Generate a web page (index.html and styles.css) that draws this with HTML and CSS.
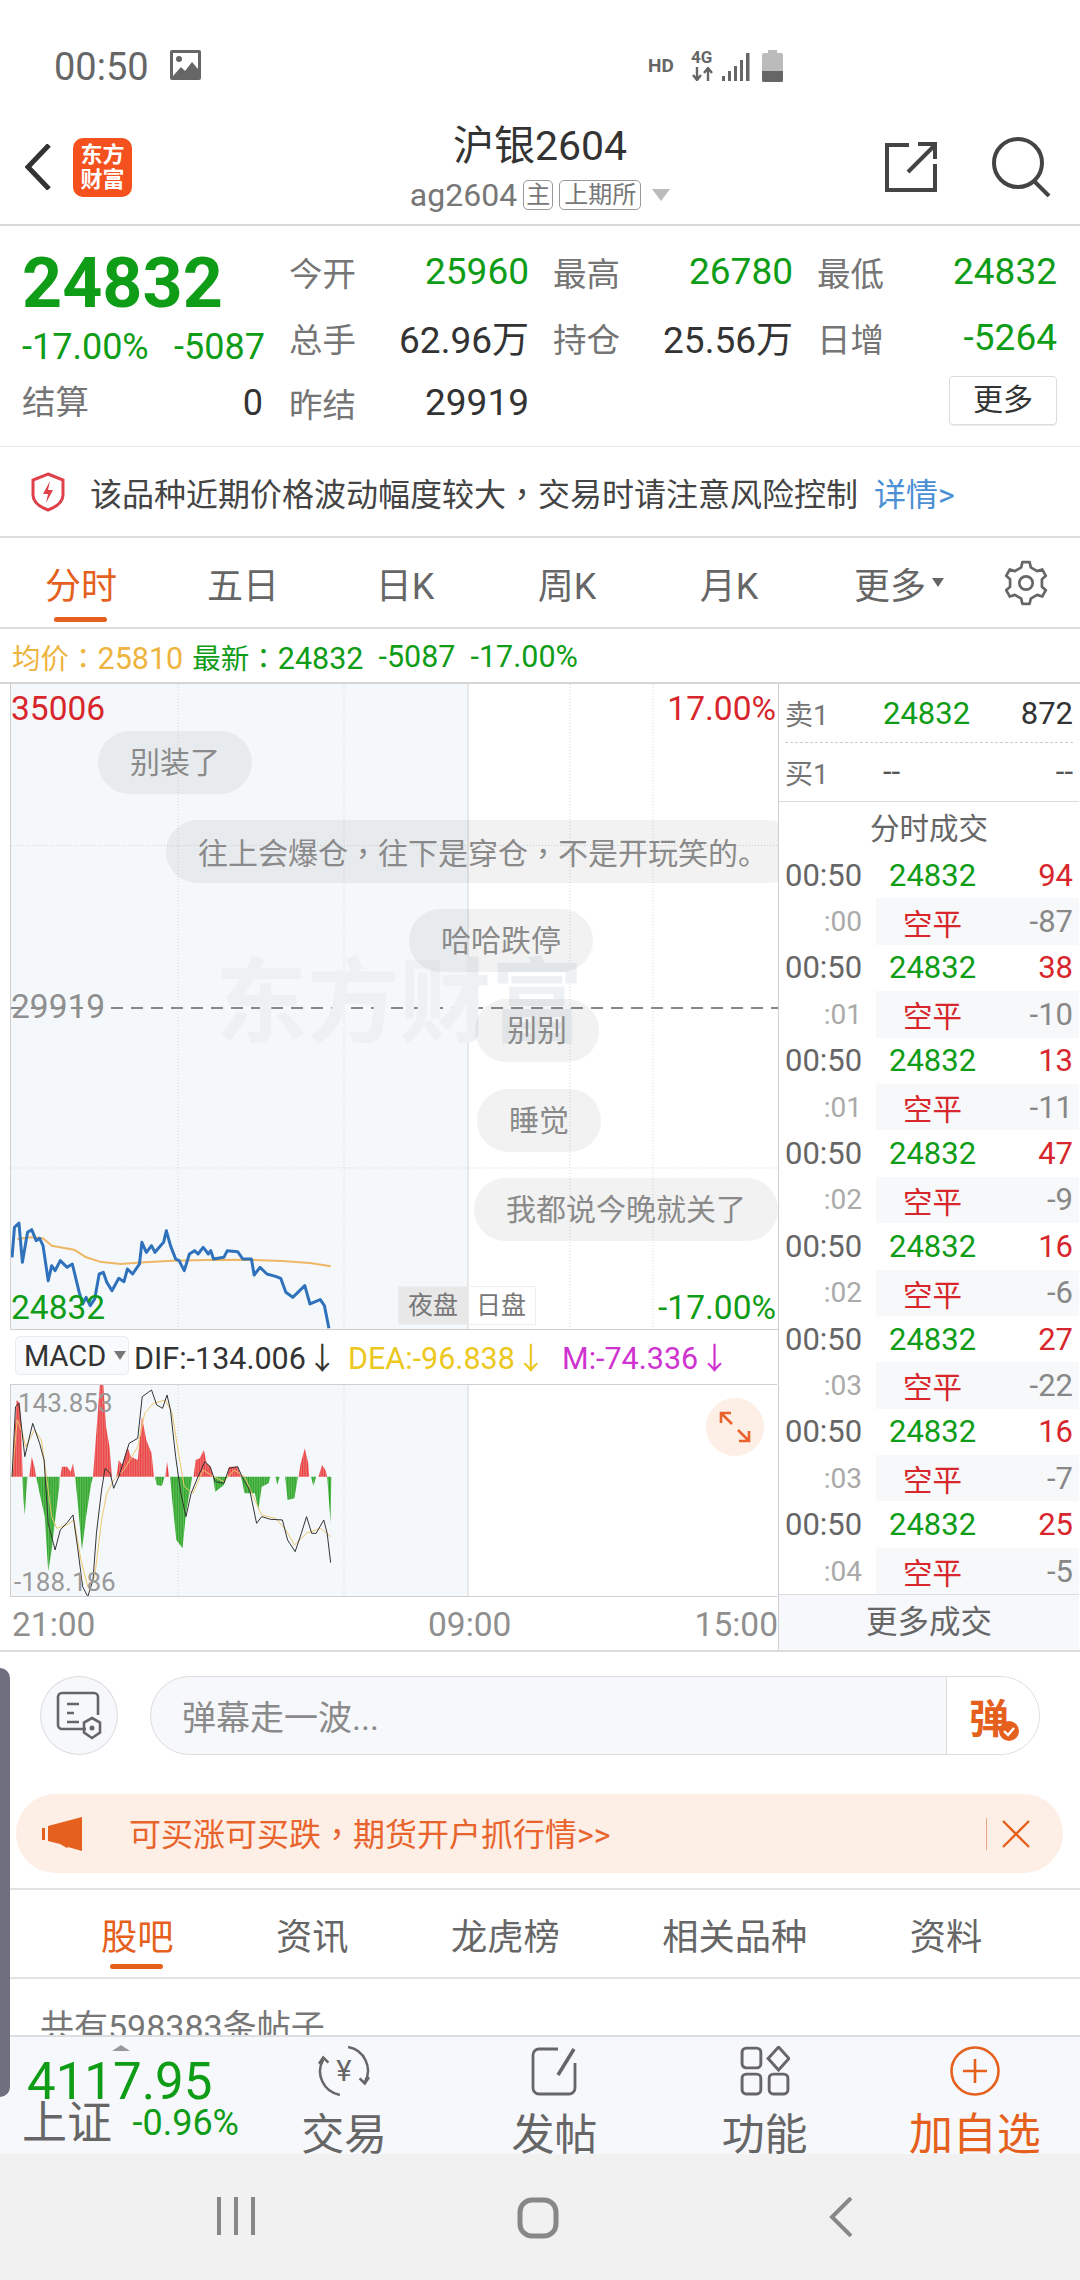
FILE: index.html
```html
<!DOCTYPE html>
<html lang="zh-CN">
<head>
    <meta charset="UTF-8">
    <meta name="viewport" content="width=device-width, initial-scale=1.0">
    <title>沪银2604</title>
    <link rel="stylesheet" href="styles.css">
</head>
<body>
    <div class="edge-handle"></div>

    <!-- Status bar -->
    <div class="status">
        <span class="clock">00:50</span>
        <svg class="st-pic" viewBox="0 0 31 30"><path fill="#666" d="M2 0h27a2 2 0 0 1 2 2v26a2 2 0 0 1-2 2H2a2 2 0 0 1-2-2V2a2 2 0 0 1 2-2z"/><path fill="#fff" d="M3 3h25v16l-6-7-7 9-4-4-8 9z"/><circle cx="9" cy="9" r="3" fill="#666"/></svg>
        <span class="st-hd">HD</span>
        <span class="st-net"><b>4G</b><svg viewBox="0 0 23 14"><path fill="none" stroke="#666" stroke-width="2.4" d="M6 0v12M2 8l4 5 4-5M17 14V2M13 6l4-5 4 5"/></svg></span>
        <svg class="st-signal" viewBox="0 0 28 28"><path fill="#666" d="M0 23h3v5H0zM6 18h3v10H6zM12 13h3v15h-3zM18 7h3v21h-3zM24 0h3.500v28H24z"/></svg>
        <svg class="st-batt" viewBox="0 0 21 32"><path fill="#bbb" d="M6 0h9v3h4a2 2 0 0 1 2 2v27H0V5a2 2 0 0 1 2-2h4z"/><path fill="#666" d="M0 21h21v9a2 2 0 0 1-2 2H2a2 2 0 0 1-2-2z"/></svg>
    </div>

    <!-- Title bar -->
    <div class="head">
        <svg class="back" viewBox="0 0 26 46"><path fill="none" stroke="#333" stroke-width="5" d="M24 1L3 23l21 22"/></svg>
        <div class="logo"><span>东方</span><span>财富</span></div>
        <div class="title-box">
            <div class="title">沪银2604</div>
            <div class="title-sub">ag2604<span class="tag tag-a">主</span><span class="tag tag-b">上期所</span><i class="tri"></i></div>
        </div>
        <svg class="share" viewBox="0 0 52 50"><path fill="none" stroke="#444" stroke-width="4" d="M24 3H2v45h48V22M23 30L49 4M33 2h17v15"/></svg>
        <svg class="search" viewBox="0 0 60 60"><circle cx="27" cy="26" r="24" fill="none" stroke="#444" stroke-width="4"/><path stroke="#444" stroke-width="4" d="M43 44l15 15"/></svg>
    </div>

    <!-- Quote -->
    <div class="quote">
        <div class="q-left">
            <div class="q-big down">24832</div>
            <div class="q-chg down"><span>-17.00%</span><span>-5087</span></div>
            <div class="q-settle"><span class="lb">结算</span><span>0</span></div>
        </div>
        <div class="q-grid">
            <div class="pair"><span class="lb">今开</span><span class="down">25960</span></div>
            <div class="pair"><span class="lb">最高</span><span class="down">26780</span></div>
            <div class="pair"><span class="lb">最低</span><span class="down">24832</span></div>
            <div class="pair"><span class="lb">总手</span><span>62.96万</span></div>
            <div class="pair"><span class="lb">持仓</span><span>25.56万</span></div>
            <div class="pair"><span class="lb">日增</span><span class="down">-5264</span></div>
            <div class="pair"><span class="lb">昨结</span><span>29919</span></div>
            <div></div>
            <div class="more-btn">更多</div>
        </div>
    </div>

    <!-- Risk notice -->
    <div class="notice">
        <svg class="shield" viewBox="0 0 36 40"><path fill="none" stroke="#e0404a" stroke-width="3" d="M18 2l15 6v15c0 7-7 12-15 15C10 35 3 30 3 23V8z"/><path fill="#e0404a" d="M20 9l-7 13h5l-2 9 7-13h-5z"/></svg>
        <span>该品种近期价格波动幅度较大<span class="pn" lang="zh-TW">，</span>交易时请注意风险控制</span>
        <span class="link">详情&gt;</span>
    </div>

    <!-- Period tabs -->
    <div class="tabs">
        <div class="tab on">分时</div>
        <div class="tab">五日</div>
        <div class="tab">日K</div>
        <div class="tab">周K</div>
        <div class="tab">月K</div>
        <div class="tab tab-more">更多<i class="tri-sm"></i></div>
        <div class="tab">
            <svg class="gear" viewBox="0 0 48 48"><path fill="none" stroke="#666" stroke-width="2.800" stroke-linejoin="round" d="M19 7.700L20.200 2.300H27.800L29 7.700L35.600 11.600L40.900 9.900L44.700 16.500L40.600 20.200V27.800L44.700 31.500L40.900 38.100L35.600 36.400L29 40.300L27.800 45.700H20.200L19 40.300L12.400 36.400L7.100 38.100L3.300 31.500L7.400 27.800V20.200L3.300 16.500L7.100 9.900L12.400 11.600z"/><circle cx="24" cy="24" r="7" fill="none" stroke="#666" stroke-width="2.800"/></svg>
        </div>
    </div>

    <div class="legend">
        <span class="avg"><span class="lg-k">均价<span class="pn" lang="zh-TW">：</span></span>25810</span>
        <span class="down"><span class="lg-k">最新<span class="pn" lang="zh-TW">：</span></span>24832</span>
        <span class="down">-5087</span>
        <span class="down">-17.00%</span>
    </div>

    <div class="market">
        <div class="charts">
            <!-- Price chart -->
            <div class="chart">
                <svg class="plot plot-main" viewBox="11 685 767 645">
                    <rect x="11" y="685" width="457" height="645" fill="#f5f8fb"/>
                    <path class="grid-dot" d="M178 685v645M344 685v645M570 685v645M653 685v645M11 846.500h767M11 1169h767"/>
                    <path class="grid-solid" d="M468 685v645"/>
                    <g transform="translate(0 1200) scale(.3444 .3333)">
                        <polyline class="ln-avg" points="50,120 90,115 125,118 150,140 215,152 250,175 290,188 350,195 420,190 500,185 600,183 720,182 820,186 900,192 960,202"/>
                        <polyline class="ln-price" points="35,175 42,85 55,72 65,190 80,100 92,92 105,125 115,118 125,140 140,245 150,200 160,215 175,185 195,205 210,195 230,280 240,315 250,295 262,320 275,300 288,225 300,220 310,250 325,275 345,238 360,248 370,210 385,225 405,195 412,130 425,160 440,140 450,160 475,130 483,95 495,140 510,180 520,185 535,215 550,165 565,155 575,165 590,145 605,165 612,155 620,180 650,175 660,155 690,158 705,180 730,180 738,228 755,205 775,225 800,232 815,238 830,280 850,295 870,275 885,260 900,315 930,302 942,320 955,388"/>
                    </g>
                    <path class="ln-base" d="M11 1009H778"/>
                </svg>
                <div class="wm">东方财富</div>
                <span class="ax ax-tl up">35006</span>
                <span class="ax ax-tr up">17.00%</span>
                <span class="ax ax-ml">29919</span>
                <span class="ax ax-bl down">24832</span>
                <span class="ax ax-br down">-17.00%</span>
                <div class="bub b1">别装了</div>
                <div class="bub b2">往上会爆仓<span class="pn" lang="zh-TW">，</span>往下是穿仓<span class="pn" lang="zh-TW">，</span>不是开玩笑的。</div>
                <div class="bub b3">哈哈跌停</div>
                <div class="bub b4">别别</div>
                <div class="bub b5">睡觉</div>
                <div class="bub b6">我都说今晚就关了</div>
                <div class="session"><span class="on">夜盘</span><span>日盘</span></div>
            </div>

            <!-- MACD -->
            <div class="macd-bar">
                <div class="macd-sel">MACD<i class="tri-md"></i></div>
                <span class="dif">DIF:-134.006<em>↓</em></span>
                <span class="dea">DEA:-96.838<em>↓</em></span>
                <span class="m">M:-74.336<em>↓</em></span>
            </div>
            <div class="chart macd">
                <svg class="plot plot-macd" viewBox="11 1385 767 212">
                    <defs>
                        <pattern id="barsRed" patternUnits="userSpaceOnUse" width="4.900" height="10"><rect width="4.200" height="10" fill="#ea3f3f"/></pattern>
                        <pattern id="barsGreen" patternUnits="userSpaceOnUse" width="4.900" height="10"><rect width="4.200" height="10" fill="#2aa523"/></pattern>
                    </defs>
                    <rect x="11" y="1385" width="457" height="212" fill="#f5f8fb"/>
                    <path class="grid-dot" d="M178 1385v212M344 1385v212"/>
                    <path class="grid-solid" d="M468 1385v212"/>
                    <g transform="translate(0 1200) scale(.3444 .3333)">
                        <path fill="url(#barsRed)" d="M35 830L40 740L48 600L58 610L62 700L66 830zM85 830L92 770L100 800L105 830zM175 830L180 800L195 800L205 815L212 790L218 830zM270 830L278 720L290 555L300 555L308 680L318 740L325 830zM338 830L345 780L355 795L370 740L380 770L400 780L412 650L425 720L440 760L447 830zM480 830L485 785L491 830zM562 830L568 780L580 775L592 750L600 790L612 800L618 830zM660 830L665 800L690 800L700 830zM867 830L872 795L885 745L895 790L898 830zM925 830L935 795L945 810L950 830z"/>
                        <path fill="url(#barsGreen)" d="M65 830L68 900L72 945L76 880L80 830zM105 830L115 880L130 950L140 1115L150 1050L160 960L172 860L173 830zM218 830L225 900L238 1050L250 950L265 850L270 830zM450 830L455 855L470 858L478 830zM494 830L500 900L512 1020L530 1045L540 940L555 850L558 830zM618 830L625 875L650 855L660 830zM700 830L710 880L740 880L750 930L760 860L780 850L785 830zM800 830L805 855L812 830zM828 830L835 900L855 895L865 830zM903 830L910 858L918 830zM950 830L960 970L962 830z"/>
                        <polyline class="ln-dea" points="35,830 50,660 65,700 75,740 100,690 120,720 135,830 150,950 165,985 195,975 215,960 235,1080 255,1160 275,1130 295,960 310,880 330,840 360,810 400,740 420,640 445,610 480,600 500,640 520,770 535,860 560,880 590,810 620,830 650,845 680,810 710,830 740,900 760,945 800,955 830,990 855,1035 890,1000 930,985 960,1010"/>
                        <polyline class="ln-dif" points="35,830 45,620 55,610 72,770 95,670 115,730 128,780 140,970 155,1030 160,1050 175,990 195,968 212,945 225,1040 240,1160 255,1190 270,1140 280,1000 295,870 305,805 320,820 330,865 345,830 375,730 400,715 413,590 440,570 455,615 472,625 485,585 495,630 510,770 525,880 540,950 555,880 575,830 595,785 610,800 625,845 650,850 665,805 690,800 705,835 725,870 745,970 760,950 785,958 820,960 835,1020 857,1055 875,1000 890,950 905,1000 918,1000 940,960 950,1000 960,1088"/>
                    </g>
                </svg>
                <span class="mx mx-t">143.853</span>
                <span class="mx mx-b">-188.186</span>
                <div class="expand">
                    <svg viewBox="0 0 32 32"><path fill="none" stroke="#e8642c" stroke-width="2.600" d="M2 12V2h10M2 2l11 11M30 20v10H20M30 30L19 19"/></svg>
                </div>
            </div>
            <div class="axis"><span class="ax-first">21:00</span><span>09:00</span><span class="ax-last">15:00</span></div>
        </div>

        <!-- Order book and ticks -->
        <div class="side">
            <div class="book book-sell"><span class="lb">卖1</span><span class="down">24832</span><span class="dark">872</span></div>
            <div class="book book-buy"><span class="lb">买1</span><span>--</span><span>--</span></div>
            <div class="ticks-title">分时成交</div>

            <div class="tick"><span class="t">00:50</span><div class="tv"><span class="down">24832</span><span class="up">94</span></div></div>
            <div class="tick tick-sub"><span class="t">:00</span><div class="tv"><span class="up">空平</span><span>-87</span></div></div>
            <div class="tick"><span class="t">00:50</span><div class="tv"><span class="down">24832</span><span class="up">38</span></div></div>
            <div class="tick tick-sub"><span class="t">:01</span><div class="tv"><span class="up">空平</span><span>-10</span></div></div>
            <div class="tick"><span class="t">00:50</span><div class="tv"><span class="down">24832</span><span class="up">13</span></div></div>
            <div class="tick tick-sub"><span class="t">:01</span><div class="tv"><span class="up">空平</span><span>-11</span></div></div>
            <div class="tick"><span class="t">00:50</span><div class="tv"><span class="down">24832</span><span class="up">47</span></div></div>
            <div class="tick tick-sub"><span class="t">:02</span><div class="tv"><span class="up">空平</span><span>-9</span></div></div>
            <div class="tick"><span class="t">00:50</span><div class="tv"><span class="down">24832</span><span class="up">16</span></div></div>
            <div class="tick tick-sub"><span class="t">:02</span><div class="tv"><span class="up">空平</span><span>-6</span></div></div>
            <div class="tick"><span class="t">00:50</span><div class="tv"><span class="down">24832</span><span class="up">27</span></div></div>
            <div class="tick tick-sub"><span class="t">:03</span><div class="tv"><span class="up">空平</span><span>-22</span></div></div>
            <div class="tick"><span class="t">00:50</span><div class="tv"><span class="down">24832</span><span class="up">16</span></div></div>
            <div class="tick tick-sub"><span class="t">:03</span><div class="tv"><span class="up">空平</span><span>-7</span></div></div>
            <div class="tick"><span class="t">00:50</span><div class="tv"><span class="down">24832</span><span class="up">25</span></div></div>
            <div class="tick tick-sub"><span class="t">:04</span><div class="tv"><span class="up">空平</span><span>-5</span></div></div>

            <div class="ticks-more">更多成交</div>
        </div>
    </div>

    <!-- Danmaku input -->
    <div class="danmu">
        <div class="danmu-set">
            <svg viewBox="0 0 46 50"><path fill="none" stroke="#666" stroke-width="2.600" d="M30 38H6a4 4 0 0 1-4-4V6a4 4 0 0 1 4-4h32a4 4 0 0 1 4 4v18M11 13h12M11 22h7M11 31h12"/><path fill="none" stroke="#666" stroke-width="2.600" d="M36 27l8 4.500v10L36 47l-8-5.500v-10z"/><circle cx="36" cy="37" r="2.500" fill="#666"/></svg>
        </div>
        <div class="danmu-input">
            <span class="ph">弹幕走一波...</span>
            <div class="danmu-send"><b>弹</b><svg viewBox="0 0 20 20"><circle cx="10" cy="10" r="10" fill="#e5601c"/><path fill="none" stroke="#fff" stroke-width="2.400" d="M5 10l4 4 6-7"/></svg></div>
        </div>
    </div>

    <div class="banner">
        <svg class="horn" viewBox="0 0 40 34"><path fill="#e5601c" d="M0 11h3v12H0zM6 9l34-9v34l-14-4-1 1-7-4-12-3z"/></svg>
        <span class="banner-txt">可买涨可买跌<span class="pn" lang="zh-TW">，</span>期货开户抓行情&gt;&gt;</span>
        <i class="banner-div"></i>
        <svg class="banner-x" viewBox="0 0 30 30"><path fill="none" stroke="#e5601c" stroke-width="2.400" d="M2 2l26 26M28 2L2 28"/></svg>
    </div>

    <div class="bar-tabs">
        <span class="on">股吧</span>
        <span>资讯</span>
        <span>龙虎榜</span>
        <span>相关品种</span>
        <span>资料</span>
    </div>

    <div class="count">共有598383条帖子</div>

    <!-- Bottom toolbar -->
    <div class="bottom">
        <div class="index">
            <i class="idx-tri"></i>
            <div class="idx-val down">4117.95</div>
            <div class="idx-row"><span class="idx-name">上证</span><span class="idx-pct down">-0.96%</span></div>
        </div>
        <div class="act">
            <svg class="act-trade" viewBox="0 0 52 50"><path fill="none" stroke="#666" stroke-width="2.400" d="M30 2a23 23 0 0 1 16 34M22 48A23 23 0 0 1 6 14"/><path fill="none" stroke="#666" stroke-width="2.400" d="M2 18l4-6 5 5M50 31l-4 6-5-5"/><text x="26" y="35" class="yen">¥</text></svg>
            <span>交易</span>
        </div>
        <div class="act">
            <svg viewBox="0 0 48 50"><path fill="none" stroke="#666" stroke-width="2.800" d="M28 3H9a6 6 0 0 0-6 6v33a6 6 0 0 0 6 6h30a6 6 0 0 0 6-6V17"/><path fill="none" stroke="#666" stroke-width="3.500" d="M44 3L28 29"/></svg>
            <span>发帖</span>
        </div>
        <div class="act">
            <svg viewBox="0 0 48 48"><g fill="none" stroke="#666" stroke-width="2.800"><rect x="2" y="2" width="18" height="19" rx="4"/><rect x="2" y="27" width="18" height="19" rx="4"/><rect x="28" y="27" width="18" height="19" rx="4"/><path d="M37 1l10 11-10 11-10-11z"/></g></svg>
            <span>功能</span>
        </div>
        <div class="act act-add">
            <svg viewBox="0 0 50 50"><circle cx="25" cy="25" r="23.500" fill="none" stroke="#e5601c" stroke-width="2.600"/><path stroke="#e5601c" stroke-width="2.600" d="M13 25h24M25 13v24"/></svg>
            <span>加自选</span>
        </div>
    </div>

    <!-- Android nav -->
    <div class="nav">
        <svg class="nav-a" viewBox="0 0 38 38"><path stroke="#888" stroke-width="4" d="M2 0v38M19 0v38M36 0v38"/></svg>
        <svg class="nav-b" viewBox="0 0 42 42"><rect x="3" y="3" width="36" height="36" rx="12" fill="none" stroke="#888" stroke-width="5"/></svg>
        <svg class="nav-c" viewBox="0 0 24 40"><path fill="none" stroke="#888" stroke-width="4" d="M22 1L3 20l19 19"/></svg>
    </div>
</body>
</html>
```

FILE: styles.css
```css
:root {
    --green: #0f9c16;
    --red: #d8262d;
    --orange: #e5601c;
    --line: #dedede;
    --label: #757575;
    --dark: #333;
    --soft: #f6f8fb;
}

html, body {
    margin: 0;
    padding: 0;
}

body {
    position: relative;
    width: 1080px;
    height: 2280px;
    overflow: hidden;
    background: #fff;
    color: var(--dark);
    font-family: Roboto, "Noto Sans CJK SC", sans-serif;
}

svg {
    display: block;
}

i {
    display: block;
}

.down { color: var(--green); }
.up { color: var(--red); }
.lb { color: var(--label); }
.dark { color: var(--dark); }

/* punctuation sits centred in the cell on this screen */
.pn {
    font-family: "Noto Sans CJK TC", sans-serif;
}

.edge-handle {
    position: absolute;
    left: 0;
    top: 1668px;
    width: 10px;
    height: 429px;
    background: #6f6f7f;
    border-radius: 0 12px 12px 0;
    z-index: 5;
}

/* Status bar */
.status {
    height: 112px;
    position: relative;
    display: flex;
    align-items: center;
    padding: 20px 0 0 54px;
    box-sizing: border-box;
}

.clock {
    font-size: 38px;
    color: #666;
    margin-top: 2px;
    width: 116px;
}

.st-pic {
    width: 31px;
    height: 30px;
    margin-top: -2px;
}

.st-hd {
    margin-left: 447px;
    font-size: 19px;
    font-weight: 700;
    color: #666;
    width: 43px;
    margin-top: -1px;
}

.st-net {
    width: 23px;
    margin-top: -2px;
    margin-right: 8px;
}

.st-net b {
    display: block;
    font-size: 17px;
    line-height: 16px;
    color: #666;
}

.st-net svg {
    width: 23px;
    height: 14px;
    margin-top: 2px;
}

.st-signal {
    width: 28px;
    height: 28px;
    margin-top: 2px;
    margin-right: 12px;
}

.st-batt {
    width: 21px;
    height: 32px;
    margin-top: 0;
}

/* Title bar */
.head {
    position: relative;
    height: 112px;
    border-bottom: 2px solid #d9d9d9;
    display: flex;
    align-items: flex-start;
}

.back {
    width: 26px;
    height: 46px;
    margin: 32px 0 0 25px;
}

.logo {
    width: 59px;
    height: 59px;
    margin: 26px 0 0 22px;
    background: #f4511e;
    border-radius: 10px;
    color: #fff;
    font-size: 22px;
    font-weight: 700;
    line-height: 25px;
    text-align: center;
    padding-top: 4px;
    box-sizing: border-box;
}

.logo span {
    display: block;
}

.title-box {
    position: absolute;
    left: 0;
    right: 0;
    top: 0;
    text-align: center;
}

.title {
    font-size: 41px;
    line-height: 50px;
    color: #333;
    margin-top: 9px;
}

.title-sub {
    display: flex;
    align-items: center;
    justify-content: center;
    font-size: 32px;
    line-height: 40px;
    color: #777;
    margin-top: 4px;
}

.tag {
    border: 1px solid #999;
    border-radius: 5px;
    font-size: 24px;
    line-height: 28px;
    height: 28px;
    padding: 0 2px;
    margin-left: 6px;
    color: #777;
}

.tag-b {
    padding: 0 4px;
}

.tri {
    width: 0;
    height: 0;
    margin-left: 11px;
    border-left: 9px solid transparent;
    border-right: 9px solid transparent;
    border-top: 12px solid #bbb;
}

.share {
    position: absolute;
    left: 885px;
    top: 30px;
    width: 52px;
    height: 50px;
}

.search {
    position: absolute;
    left: 991px;
    top: 25px;
    width: 60px;
    height: 60px;
}

/* Quote */
.quote {
    height: 220px;
    display: flex;
    border-bottom: 1px solid #e6e6e6;
}

.q-left {
    width: 289px;
    padding: 11px 0 0 22px;
    box-sizing: border-box;
}

.q-big {
    font-size: 70px;
    font-weight: 700;
    line-height: 92px;
    height: 92px;
}

.q-chg {
    display: flex;
    justify-content: space-between;
    width: 243px;
    font-size: 36px;
    line-height: 36px;
}

.q-settle {
    display: flex;
    justify-content: space-between;
    width: 241px;
    margin-top: 20px;
    font-size: 36px;
    line-height: 36px;
}

.q-settle .lb {
    font-size: 33.500px;
}

.q-grid {
    display: grid;
    grid-template-columns: repeat(3, 240px);
    grid-auto-rows: 65.500px;
    column-gap: 24px;
    padding-top: 13px;
    align-items: center;
    font-size: 37px;
}

.pair {
    display: flex;
    justify-content: space-between;
    align-items: center;
}

.pair .lb {
    font-size: 33.500px;
}

.more-btn {
    justify-self: end;
    width: 108px;
    height: 49px;
    line-height: 46px;
    margin-top: -4px;
    text-align: center;
    box-sizing: border-box;
    border: 1px solid #dcdcdc;
    border-radius: 4px;
    font-size: 30px;
    box-shadow: 0 1px 1px #eee;
}

/* Notice */
.notice {
    height: 89px;
    display: flex;
    align-items: center;
    padding-left: 30px;
    border-bottom: 2px solid #dcdcdc;
    font-size: 32px;
    color: #444;
}

.shield {
    width: 36px;
    height: 40px;
    margin-right: 24px;
}

.link {
    color: #4a8fd4;
    margin-left: 16px;
}

/* Period tabs */
.tabs {
    height: 91px;
    display: grid;
    grid-template-columns: repeat(6, 162px) 108px;
    border-bottom: 2px solid #dcdcdc;
    box-sizing: border-box;
}

.tab {
    position: relative;
    display: flex;
    align-items: center;
    justify-content: center;
    font-size: 36px;
    color: #666;
}

.tab.on {
    color: var(--orange);
}

.tab.on::after {
    content: "";
    position: absolute;
    left: 54px;
    top: 79px;
    width: 53px;
    height: 5px;
    border-radius: 3px;
    background: var(--orange);
}

.tab-more {
    padding-left: 16px;
}

.tri-sm {
    margin-left: 6px;
    border-left: 6px solid transparent;
    border-right: 6px solid transparent;
    border-top: 9px solid #666;
}

.gear {
    width: 46px;
    height: 46px;
}

.legend {
    height: 55px;
    display: flex;
    align-items: center;
    padding: 2px 0 0 12px;
    gap: 15px;
    font-size: 30.500px;
    border-bottom: 2px solid #d6d6d6;
    box-sizing: border-box;
}

.lg-k {
    font-size: 28.500px;
}

.avg {
    color: #eeb440;
    margin-right: -6px;
}

/* Charts */
.market {
    height: 966px;
    display: flex;
    border-bottom: 2px solid #dcdcdc;
}

.charts {
    width: 779px;
    flex: none;
    padding-left: 11px;
    box-sizing: border-box;
}

.chart {
    position: relative;
    width: 767px;
    height: 645px;
    overflow: hidden;
    border-bottom: 1px solid #cfcfcf;
    border-left: 1px solid #cfcfcf;
    margin-left: -1px;
}

.plot {
    width: 767px;
    height: 645px;
}

.plot-macd {
    height: 212px;
}

.grid-dot {
    fill: none;
    stroke: #d2d8dd;
    stroke-width: 1;
    stroke-dasharray: 1 2;
}

.grid-solid {
    fill: none;
    stroke: #d4d4d4;
    stroke-width: 1;
}

.ln-base {
    fill: none;
    stroke: #888;
    stroke-width: 2;
    stroke-dasharray: 12 8;
}

.ln-price,
.ln-avg,
.ln-dif,
.ln-dea {
    fill: none;
    vector-effect: non-scaling-stroke;
    stroke-linejoin: round;
}

.ln-price {
    stroke: #2f72bb;
    stroke-width: 3;
}

.ln-avg {
    stroke: #edb765;
    stroke-width: 2;
}

.ln-dif {
    stroke: #333;
    stroke-width: 1;
}

.ln-dea {
    stroke: #edc76f;
    stroke-width: 1;
}

.wm {
    position: absolute;
    left: 204px;
    top: 270px;
    font-size: 92px;
    line-height: 100px;
    font-weight: 700;
    color: #eef1f4;
    white-space: nowrap;
}

.ax {
    position: absolute;
    font-size: 33.500px;
    line-height: 40px;
}

.ax-tl { left: 0; top: 5px; }
.ax-tr { right: 2px; top: 5px; }
.ax-ml { left: 0; top: 303px; color: #8f8f8f; }
.ax-bl { left: 0; top: 604px; }
.ax-br { right: 2px; top: 604px; }

.bub {
    position: absolute;
    height: 63px;
    line-height: 63px;
    padding: 0 32px;
    border-radius: 32px;
    font-size: 30px;
    color: #8a8a8a;
    background: rgba(90, 90, 90, .08);
    white-space: nowrap;
}

.b1 { left: 87px; top: 47px; }
.b2 { left: 155px; top: 136px; }
.b3 { left: 398px; top: 225px; }
.b4 { left: 464px; top: 315px; }
.b5 { left: 466px; top: 405px; }
.b6 { left: 463px; top: 494px; }

.session {
    position: absolute;
    left: 387px;
    top: 602px;
    display: flex;
    height: 39px;
    font-size: 25px;
    line-height: 38px;
    color: #777;
    border: 1px solid #eee;
    box-sizing: border-box;
}

.session span {
    width: 68px;
    text-align: center;
}

.session .on {
    background: #e8e8e8;
}

.macd-bar {
    height: 54px;
    display: flex;
    align-items: center;
    margin-left: 4px;
    padding-bottom: 3px;
    box-sizing: border-box;
    font-size: 30.500px;
    white-space: nowrap;
}

.macd-sel {
    display: flex;
    align-items: center;
    width: 114px;
    height: 39px;
    box-sizing: border-box;
    padding-left: 8px;
    margin-right: 5px;
    font-size: 29px;
    background: #f8fafc;
    border: 1px solid #e8ecef;
    border-radius: 5px;
}

.tri-md {
    margin-left: 8px;
    border-left: 6px solid transparent;
    border-right: 6px solid transparent;
    border-top: 9px solid #777;
}

.macd-bar em {
    font-style: normal;
    margin-left: 1px;
}

.dif {
    width: 214px;
}

.dea {
    width: 214px;
    color: #ecc81f;
}

.m {
    color: #cf33cf;
}

.macd {
    height: 213px;
    border-top: 1px solid #cfcfcf;
    box-sizing: border-box;
}

.mx {
    position: absolute;
    left: 4px;
    font-size: 26px;
    line-height: 30px;
    color: #999;
}

.mx-t { top: 3px; left: 7px; }
.mx-b { top: 182px; left: 3px; }

.expand {
    position: absolute;
    left: 695px;
    top: 13px;
    width: 58px;
    height: 58px;
    display: flex;
    align-items: center;
    justify-content: center;
    border-radius: 50%;
    background: #fdeee6;
}

.expand svg {
    width: 32px;
    height: 32px;
}

.axis {
    height: 53px;
    display: flex;
    align-items: center;
    padding: 2px 0 0 1px;
    box-sizing: border-box;
    font-size: 33.500px;
    color: #8f8f8f;
    width: 767px;
}

.ax-first {
    width: 416px;
}

.ax-last {
    margin-left: auto;
}

/* Side panel */
.side {
    width: 301px;
    border-left: 1px solid #cfcfcf;
    box-sizing: border-box;
    margin-left: -1px;
    color: #888;
}

.book {
    display: grid;
    grid-template-columns: 98px 1fr auto;
    align-items: center;
    padding: 0 6px;
    font-size: 31px;
}

.book .lb {
    font-size: 28px;
}

.book-sell {
    height: 58px;
}

.book-buy {
    height: 60px;
    border-bottom: 1px solid #dcdcdc;
    position: relative;
    color: #555;
    box-sizing: border-box;
}

.book-buy::before {
    content: "";
    position: absolute;
    left: 6px;
    right: 6px;
    top: 0;
    border-top: 1px dashed #ccc;
}

.ticks-title {
    height: 50px;
    line-height: 54px;
    text-align: center;
    font-size: 29.500px;
    color: #666;
}

.tick {
    display: grid;
    grid-template-columns: 97px 203px;
    grid-template-rows: 46.400px;
    height: 46.400px;
    align-items: center;
    font-size: 31px;
}

.tick .t {
    padding-left: 6px;
    color: #666;
}

.tick-sub .t {
    padding: 0 14px 0 0;
    text-align: right;
    color: #aaa;
    font-size: 28px;
}

.tv {
    display: flex;
    justify-content: space-between;
    align-items: center;
    height: 46.400px;
    padding: 0 6px 0 13px;
    box-sizing: border-box;
}

.tick-sub .tv {
    background: #f6f8fa;
    padding-left: 27px;
    color: #888;
}

.tick-sub .tv .up {
    font-size: 29.500px;
}

.ticks-more {
    height: 56px;
    line-height: 56px;
    text-align: center;
    font-size: 31.500px;
    color: #666;
    background: var(--soft);
    border-top: 1px solid #dcdcdc;
    box-sizing: border-box;
}

/* Danmaku */
.danmu {
    height: 142px;
    display: flex;
    padding: 24px 0 0 40px;
    box-sizing: border-box;
}

.danmu-set {
    width: 78px;
    height: 79px;
    box-sizing: border-box;
    border: 1px solid #dcdcdc;
    border-radius: 50%;
    background: var(--soft);
    display: flex;
    align-items: center;
    justify-content: center;
}

.danmu-set svg {
    width: 46px;
    height: 50px;
}

.danmu-input {
    width: 890px;
    height: 79px;
    margin-left: 32px;
    box-sizing: border-box;
    border: 1px solid #dcdcdc;
    border-radius: 40px;
    background: var(--soft);
    display: flex;
    align-items: center;
    justify-content: space-between;
    padding-left: 31px;
    overflow: hidden;
}

.ph {
    font-size: 34px;
    color: #8a8a8a;
}

.danmu-send {
    position: relative;
    width: 93px;
    height: 100%;
    border-left: 1px solid #dcdcdc;
    background: #fff;
    display: flex;
    align-items: center;
    padding-left: 22px;
    box-sizing: border-box;
    color: var(--orange);
    font-size: 40px;
}

.danmu-send svg {
    position: absolute;
    left: 52px;
    top: 44px;
    width: 20px;
    height: 20px;
}

.banner {
    height: 79px;
    margin: 0 17px 0 16px;
    background: #fdeee6;
    border-radius: 40px;
    display: flex;
    align-items: center;
    color: #e8642c;
    font-size: 32px;
}

.horn {
    width: 40px;
    height: 34px;
    margin-left: 26px;
}

.banner-txt {
    margin: -3px 0 0 47px;
    width: 857px;
}

.banner-div {
    width: 1px;
    height: 32px;
    background: #e8a785;
}

.banner-x {
    width: 30px;
    height: 30px;
    margin-left: 14px;
}

.bar-tabs {
    position: relative;
    height: 91px;
    margin-top: 15px;
    display: flex;
    gap: 102.500px;
    padding-left: 101px;
    align-items: center;
    border-top: 2px solid #e2e2e2;
    border-bottom: 2px solid #e2e2e2;
    box-sizing: border-box;
    font-size: 36.250px;
    color: #666;
}

.bar-tabs .on {
    position: relative;
    color: var(--orange);
}

.bar-tabs .on::after {
    content: "";
    position: absolute;
    left: 9px;
    top: 56px;
    width: 53px;
    height: 5px;
    border-radius: 3px;
    background: var(--orange);
}

.count {
    height: 56px;
    overflow: hidden;
    padding: 28px 0 0 40px;
    box-sizing: border-box;
    font-size: 34px;
    line-height: 40px;
    color: #777;
}

/* Bottom toolbar */
.bottom {
    height: 119px;
    display: grid;
    grid-template-columns: 239px repeat(4, 210.250px);
    background: var(--soft);
    border-top: 2px solid #dcdfe2;
    box-sizing: border-box;
    overflow: hidden;
}

.index {
    position: relative;
    padding-left: 22px;
}

.idx-tri {
    position: absolute;
    left: 112px;
    top: 8px;
    border-left: 9px solid transparent;
    border-right: 9px solid transparent;
    border-bottom: 6px solid #999;
}

.idx-val {
    font-size: 51px;
    line-height: 56px;
    margin-top: 17px;
    margin-left: 5px;
}

.idx-row {
    display: flex;
    align-items: center;
    margin-top: -12px;
}

.idx-name {
    font-size: 45px;
    line-height: 52px;
    color: #666;
    width: 112px;
}

.idx-pct {
    font-size: 36px;
    margin-top: -2px;
}

.act {
    display: flex;
    flex-direction: column;
    align-items: center;
    font-size: 43px;
    line-height: 52px;
    color: #666;
}

.act svg {
    width: 50px;
    height: 50px;
    margin-top: 9px;
    flex: none;
}

.act .act-trade {
    width: 56px;
    height: 52px;
    margin-top: 8px;
    margin-bottom: -1px;
}

.act span {
    margin-top: 13px;
}

.yen {
    font-size: 28px;
    fill: #666;
    text-anchor: middle;
}

.act-add {
    color: var(--orange);
    font-size: 44px;
}

/* Android nav */
.nav {
    height: 126px;
    background: #f1f1f1;
    position: relative;
}

.nav svg {
    position: absolute;
    top: 43px;
}

.nav-a { left: 217px; width: 38px; height: 38px; }
.nav-b { left: 517px; width: 42px; height: 42px; }
.nav-c { left: 829px; width: 24px; height: 40px; }
```
